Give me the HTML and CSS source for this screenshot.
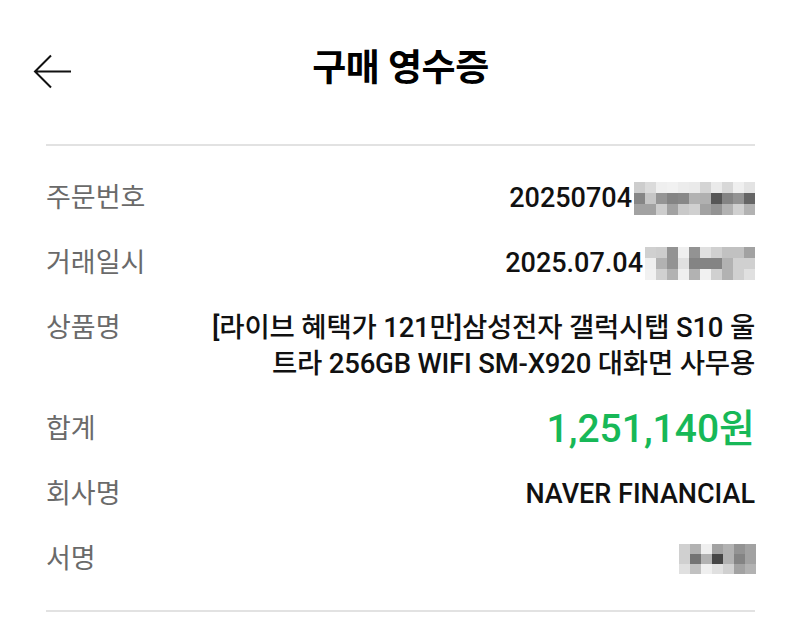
FILE: index.html
```html
<!DOCTYPE html>
<html lang="ko">
<head>
<meta charset="utf-8">
<link rel="stylesheet" href="styles.css">
</head>
<body>
<div class="page">
  <header class="topbar">
    <button class="back" aria-label="뒤로">
      <svg width="40" height="36" viewBox="0 0 40 36"><path d="M38 17.5H3M18 1.5L2 17.5L18 33.5" fill="none" stroke="#111" stroke-width="2"/></svg>
    </button>
    <h1 class="title">구매 영수증</h1>
  </header>
  <section class="receipt">
    <div class="row">
      <div class="label">주문번호</div>
      <div class="value">20250704<svg class="mosaic m1" width="121" height="33" viewBox="0 0 11 3" preserveAspectRatio="none" shape-rendering="crispEdges">
        <rect x="0" y="0" width="1" height="1" fill="#c8c8c8"/><rect x="1" y="0" width="1" height="1" fill="#d8d8d8"/><rect x="2" y="0" width="1" height="1" fill="#eeeeee"/><rect x="3" y="0" width="1" height="1" fill="#f0f0f0"/><rect x="4" y="0" width="1" height="1" fill="#eaeaea"/><rect x="5" y="0" width="1" height="1" fill="#e8e8e8"/><rect x="6" y="0" width="1" height="1" fill="#d0d0d0"/><rect x="7" y="0" width="1" height="1" fill="#e8e8e8"/><rect x="8" y="0" width="1" height="1" fill="#d4d4d4"/><rect x="9" y="0" width="1" height="1" fill="#eeeeee"/><rect x="10" y="0" width="1" height="1" fill="#e0e0e0"/>
        <rect x="0" y="1" width="1" height="1" fill="#7a7a7a"/><rect x="1" y="1" width="1" height="1" fill="#c0c0c0"/><rect x="2" y="1" width="1" height="1" fill="#8a8a8a"/><rect x="3" y="1" width="1" height="1" fill="#777777"/><rect x="4" y="1" width="1" height="1" fill="#7c7c7c"/><rect x="5" y="1" width="1" height="1" fill="#aaaaaa"/><rect x="6" y="1" width="1" height="1" fill="#a8a8a8"/><rect x="7" y="1" width="1" height="1" fill="#444444"/><rect x="8" y="1" width="1" height="1" fill="#777777"/><rect x="9" y="1" width="1" height="1" fill="#888888"/><rect x="10" y="1" width="1" height="1" fill="#555555"/>
        <rect x="0" y="2" width="1" height="1" fill="#999999"/><rect x="1" y="2" width="1" height="1" fill="#999999"/><rect x="2" y="2" width="1" height="1" fill="#c8c8c8"/><rect x="3" y="2" width="1" height="1" fill="#999999"/><rect x="4" y="2" width="1" height="1" fill="#c4c4c4"/><rect x="5" y="2" width="1" height="1" fill="#cccccc"/><rect x="6" y="2" width="1" height="1" fill="#999999"/><rect x="7" y="2" width="1" height="1" fill="#888888"/><rect x="8" y="2" width="1" height="1" fill="#aaaaaa"/><rect x="9" y="2" width="1" height="1" fill="#cccccc"/><rect x="10" y="2" width="1" height="1" fill="#aaaaaa"/>
      </svg></div>
    </div>
    <div class="row">
      <div class="label">거래일시</div>
      <div class="value">2025.07.04<svg class="mosaic m2" width="110" height="33" viewBox="0 0 10 3" preserveAspectRatio="none" shape-rendering="crispEdges">
        <rect x="0" y="0" width="1" height="1" fill="#cccccc"/><rect x="1" y="0" width="1" height="1" fill="#c8c8c8"/><rect x="2" y="0" width="1" height="1" fill="#888888"/><rect x="3" y="0" width="1" height="1" fill="#eeeeee"/><rect x="4" y="0" width="1" height="1" fill="#888888"/><rect x="5" y="0" width="1" height="1" fill="#dddddd"/><rect x="6" y="0" width="1" height="1" fill="#cccccc"/><rect x="7" y="0" width="1" height="1" fill="#bbbbbb"/><rect x="8" y="0" width="1" height="1" fill="#bbbbbb"/><rect x="9" y="0" width="1" height="1" fill="#999999"/>
        <rect x="0" y="1" width="1" height="1" fill="#eeeeee"/><rect x="1" y="1" width="1" height="1" fill="#aaaaaa"/><rect x="2" y="1" width="1" height="1" fill="#888888"/><rect x="3" y="1" width="1" height="1" fill="#dddddd"/><rect x="4" y="1" width="1" height="1" fill="#777777"/><rect x="5" y="1" width="1" height="1" fill="#777777"/><rect x="6" y="1" width="1" height="1" fill="#777777"/><rect x="7" y="1" width="1" height="1" fill="#aaaaaa"/><rect x="8" y="1" width="1" height="1" fill="#cccccc"/><rect x="9" y="1" width="1" height="1" fill="#cccccc"/>
        <rect x="0" y="2" width="1" height="1" fill="#f0f0f0"/><rect x="1" y="2" width="1" height="1" fill="#cccccc"/><rect x="2" y="2" width="1" height="1" fill="#aaaaaa"/><rect x="3" y="2" width="1" height="1" fill="#eeeeee"/><rect x="4" y="2" width="1" height="1" fill="#aaaaaa"/><rect x="5" y="2" width="1" height="1" fill="#f0f0f0"/><rect x="6" y="2" width="1" height="1" fill="#cccccc"/><rect x="7" y="2" width="1" height="1" fill="#aaaaaa"/><rect x="8" y="2" width="1" height="1" fill="#cccccc"/><rect x="9" y="2" width="1" height="1" fill="#dddddd"/>
      </svg></div>
    </div>
    <div class="row">
      <div class="label">상품명</div>
      <div class="value product">[라이브 혜택가 121만]삼성전자 갤럭시탭 S10 울<br>트라 256GB WIFI SM-X920 대화면 사무용</div>
    </div>
    <div class="row">
      <div class="label">합계</div>
      <div class="value amount">1,251,140원</div>
    </div>
    <div class="row">
      <div class="label">회사명</div>
      <div class="value">NAVER FINANCIAL</div>
    </div>
    <div class="row">
      <div class="label">서명</div>
      <div class="value"><svg class="mosaic m3" width="77" height="30" viewBox="0 0 7 3" preserveAspectRatio="none" shape-rendering="crispEdges">
        <rect x="0" y="0" width="1" height="1" fill="#cccccc"/><rect x="1" y="0" width="1" height="1" fill="#aaaaaa"/><rect x="2" y="0" width="1" height="1" fill="#eeeeee"/><rect x="3" y="0" width="1" height="1" fill="#999999"/><rect x="4" y="0" width="1" height="1" fill="#aaaaaa"/><rect x="5" y="0" width="1" height="1" fill="#888888"/><rect x="6" y="0" width="1" height="1" fill="#999999"/>
        <rect x="0" y="1" width="1" height="1" fill="#cccccc"/><rect x="1" y="1" width="1" height="1" fill="#666666"/><rect x="2" y="1" width="1" height="1" fill="#aaaaaa"/><rect x="3" y="1" width="1" height="1" fill="#333333"/><rect x="4" y="1" width="1" height="1" fill="#aaaaaa"/><rect x="5" y="1" width="1" height="1" fill="#777777"/><rect x="6" y="1" width="1" height="1" fill="#999999"/>
        <rect x="0" y="2" width="1" height="1" fill="#dddddd"/><rect x="1" y="2" width="1" height="1" fill="#bbbbbb"/><rect x="2" y="2" width="1" height="1" fill="#eeeeee"/><rect x="3" y="2" width="1" height="1" fill="#dddddd"/><rect x="4" y="2" width="1" height="1" fill="#cccccc"/><rect x="5" y="2" width="1" height="1" fill="#999999"/><rect x="6" y="2" width="1" height="1" fill="#aaaaaa"/>
      </svg></div>
    </div>
  </section>
</div>
</body>
</html>
```
FILE: styles.css
```css
html, body {
  margin: 0;
  padding: 0;
  background: #ffffff;
}
body {
  font-family: Roboto, "Noto Sans CJK KR", sans-serif;
  color: #111;
}
.page {
  width: 800px;
  height: 617px;
  overflow: hidden;
  padding: 0 45px 0 46px;
  box-sizing: border-box;
}
.topbar {
  position: relative;
  height: 144px;
  display: flex;
  align-items: center;
  justify-content: center;
  border-bottom: 2px solid #e2e2e2;
}
.topbar .title {
  margin: 0 0 6px 0;
  font-size: 37px;
  font-weight: 700;
  line-height: 42px;
  color: #000;
  letter-spacing: -0.5px;
}
.back {
  position: absolute;
  left: -13px;
  top: 54px;
  padding: 0;
  margin: 0;
  border: 0;
  background: none;
  width: 40px;
  height: 36px;
}
.back svg { display: block; }
.receipt {
  padding: 34px 0 33px;
  display: flex;
  flex-direction: column;
  gap: 29px;
  border-bottom: 2px solid #e2e2e2;
}
.row {
  display: flex;
  align-items: flex-start;
  justify-content: space-between;
  line-height: 36px;
}
.label {
  flex: 0 0 150px;
  font-size: 27px;
  color: #6a6a6a;
  font-weight: 400;
}
.value {
  flex: 1;
  text-align: right;
  font-size: 27px;
  font-weight: 500;
  color: #111;
  display: flex;
  justify-content: flex-end;
  align-items: center;
  height: 36px;
}
.value.product {
  display: block;
  height: auto;
  font-size: 27.5px;
  letter-spacing: -0.2px;
}
.value.amount {
  font-size: 39px;
  color: #17b857;
  font-weight: 500;
}
.mosaic {
  display: block;
  margin-left: 2px;
  opacity: 0.9;
}
.m3 { margin-right: -1px; }
```
